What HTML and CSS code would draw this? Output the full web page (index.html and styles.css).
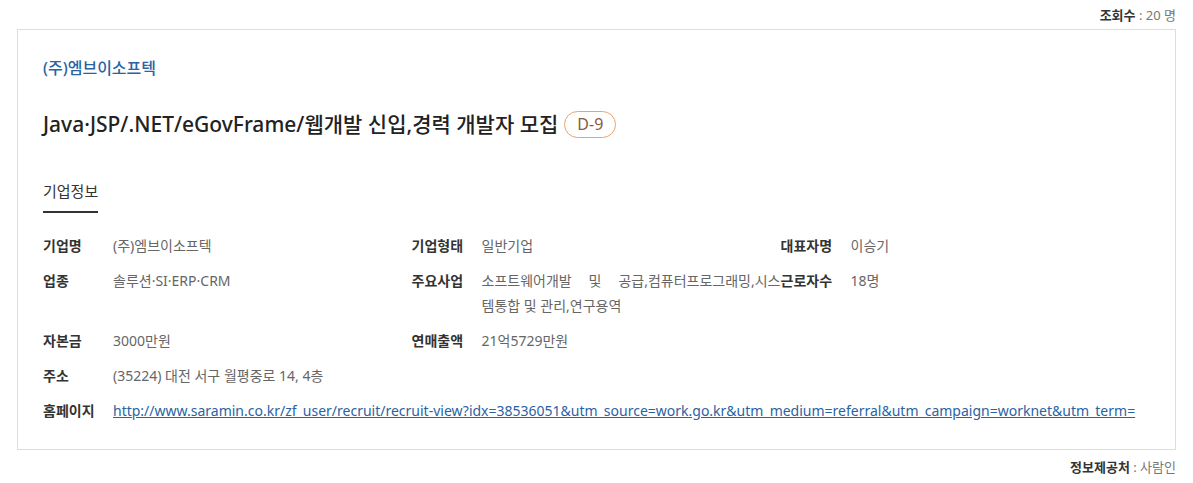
FILE: index.html
```html
<!DOCTYPE html>
<html lang="ko">

<head>
    <meta charset="UTF-8">
    <title>채용정보</title>
    <link rel="stylesheet" href="styles.css">
</head>

<body>
    <div class="view-count"><b>조회수</b> : 20 명</div>

    <div class="job-box">
        <p class="company">(주)엠브이소프텍</p>
        <h2 class="job-title">Java·JSP/.NET/eGovFrame/웹개발 신입,경력 개발자 모집 <span class="dday">D-9</span></h2>

        <div class="tab">
            <span class="tab-on">기업정보</span>
        </div>

        <div class="info-grid">
            <div class="item"><span class="label">기업명</span><span class="value">(주)엠브이소프텍</span></div>
            <div class="item"><span class="label">기업형태</span><span class="value">일반기업</span></div>
            <div class="item"><span class="label">대표자명</span><span class="value">이승기</span></div>

            <div class="item"><span class="label">업종</span><span class="value">솔루션·SI·ERP·CRM</span></div>
            <div class="item"><span class="label">주요사업</span><span class="value wide">소프트웨어개발&nbsp;&nbsp;&nbsp; 및&nbsp;&nbsp;&nbsp; 공급,컴퓨터프로그래밍,시스템통합 및 관리,연구용역</span></div>
            <div class="item"><span class="label">근로자수</span><span class="value">18명</span></div>

            <div class="item"><span class="label">자본금</span><span class="value">3000만원</span></div>
            <div class="item"><span class="label">연매출액</span><span class="value">21억5729만원</span></div>
            <div class="item"></div>

            <div class="item full"><span class="label">주소</span><span class="value">(35224) 대전 서구 월평중로 14, 4층</span></div>
            <div class="item full"><span class="label">홈페이지</span><a class="value link" href="#">http://www.saramin.co.kr/zf_user/recruit/recruit-view?idx=38536051&amp;utm_source=work.go.kr&amp;utm_medium=referral&amp;utm_campaign=worknet&amp;utm_term=</a></div>
        </div>
    </div>

    <div class="source"><b>정보제공처</b> : 사람인</div>
</body>

</html>
```

FILE: styles.css
```css
* {
    margin: 0;
    padding: 0;
    box-sizing: border-box;
}

body {
    font-family: 'Noto Sans', 'Noto Sans CJK KR', sans-serif;
    color: #333;
    background: #fff;
    padding: 5px 17px 0 17px;
}

.view-count,
.source {
    text-align: right;
    font-size: 13px;
    line-height: 20px;
    color: #777;
}

.view-count b,
.source b {
    color: #333;
    font-weight: bold;
}

.view-count {
    margin-bottom: 4px;
}

.source {
    margin-top: 7px;
}

.job-box {
    border: 1px solid #ddd;
    padding: 27px 26px 26px 25px;
}

.company {
    color: #2a63a3;
    font-size: 16px;
    font-weight: 500;
    line-height: 22px;
}

.job-title {
    margin-top: 29px;
    font-size: 21px;
    font-weight: 500;
    color: #222;
    line-height: 32px;
    display: flex;
    align-items: center;
    gap: 6px;
}

.dday {
    display: inline-block;
    border: 1px solid #e8a36f;
    border-radius: 14px;
    color: #8a5a3a;
    font-size: 16px;
    font-weight: normal;
    line-height: 25px;
    padding: 0 12px;
}

.tab {
    margin-top: 40px;
}

.tab-on {
    display: inline-block;
    font-size: 15px;
    line-height: 22px;
    padding-bottom: 9px;
    border-bottom: 2px solid #333;
    color: #333;
}

.info-grid {
    margin-top: 20px;
    display: grid;
    grid-template-columns: 1fr 1fr 1fr;
    row-gap: 10px;
}

.item {
    display: flex;
    font-size: 14px;
    line-height: 25px;
}

.item.full {
    grid-column: 1 / 4;
}

.label {
    width: 70px;
    flex-shrink: 0;
    font-weight: bold;
    color: #333;
}

.value {
    color: #666;
}

.value.wide {
    width: 299px;
    text-align: justify;
}

.link {
    color: #2a63a3;
    text-decoration: underline;
}
```
